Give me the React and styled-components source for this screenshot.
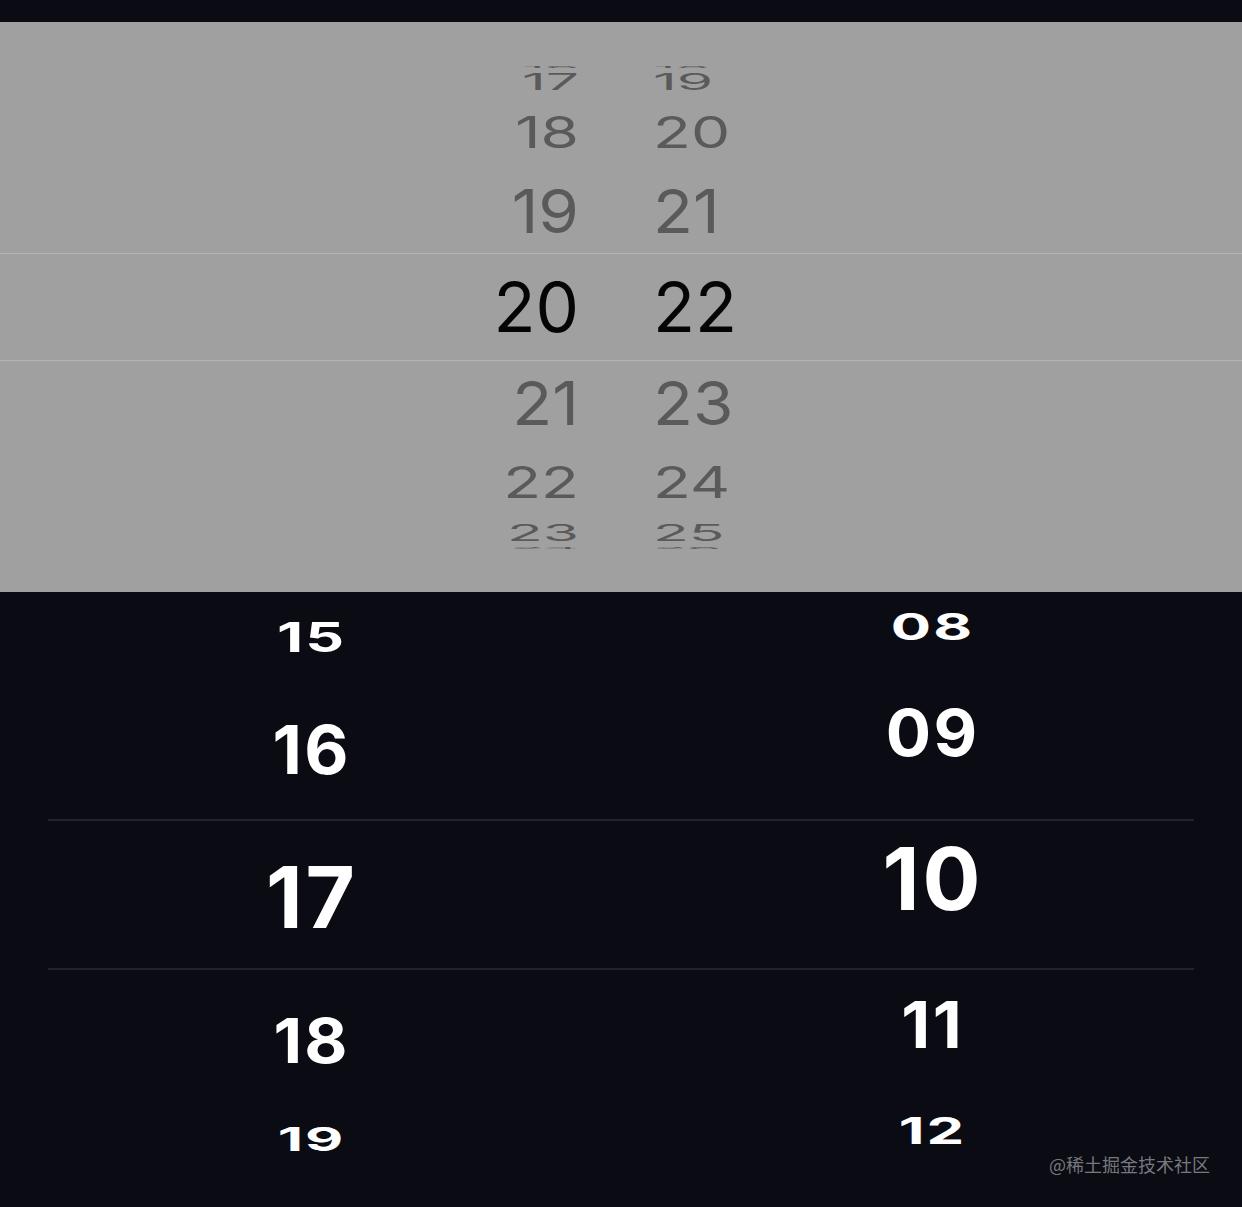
import React from "react";
import styled, { createGlobalStyle } from "styled-components";

const GlobalStyle = createGlobalStyle`
  html, body { margin: 0; padding: 0; background: #0a0b13; }
  body { font-family: Inter, "Liberation Sans", sans-serif; }
`;

const deg = Math.PI / 180;

// where a row lands on the drum: offset from the drum centre plus the squash
const place = (k, { step, shift = 0, radius, depth = 0, shrink, lens = 1, squash = true }) => {
  const theta = (k * step + shift) * deg;
  const near = Math.abs(theta) < (step * deg) / 2;
  const persp = 1 / (1 + depth * (1 - Math.cos(theta)));
  const sx = (1 - shrink * Math.abs(theta)) * (near ? 1 : lens);
  const sy = Math.max(Math.cos(theta) * (squash ? sx : near ? 1 : lens), 0.035);
  return { y: radius * Math.sin(theta) * persp, sx, sy, visible: Math.abs(theta) <= Math.PI / 2 + 1e-6 };
};

const Page = styled.div`
  display: flex;
  flex-direction: column;
  width: 1242px;
  min-height: 1207px;
  background: #0a0b13;
`;

const TopStrip = styled.div`
  height: 22px;
  background: #0a0b13;
`;

const LightPanel = styled.div`
  position: relative;
  height: 570px;
  background: #a0a0a0;
  overflow: hidden;
  display: flex;
  justify-content: center;
  gap: 74px;
  padding-right: 10px;
`;

const LightBand = styled.div`
  position: absolute;
  left: 0;
  right: 0;
  top: 231px;
  height: 106px;
  border-top: 1px solid #b4b4b4;
  border-bottom: 1px solid #b4b4b4;
  pointer-events: none;
`;

const DarkPanel = styled.div`
  position: relative;
  height: 615px;
  background: #0a0b13;
  overflow: hidden;
`;

const DarkColumns = styled.div`
  display: grid;
  grid-template-columns: 1fr 1fr;
  height: 573px;
`;

const DarkBand = styled.div`
  position: absolute;
  left: 48px;
  right: 48px;
  top: 227px;
  height: 147px;
  border-top: 2px solid #22232e;
  border-bottom: 2px solid #22232e;
  pointer-events: none;
`;

const Drum = styled.div`
  position: relative;
  width: ${(p) => p.$width || "auto"};
  height: 100%;
`;

// rows sit on a cylinder, so each one is placed from the drum centre
const Row = styled.div`
  position: absolute;
  left: 0;
  right: 0;
  top: 50%;
  height: ${(p) => p.$size}px;
  margin-top: -${(p) => p.$size / 2}px;
  padding-left: ${(p) => p.$tracking}px;
  line-height: ${(p) => p.$size}px;
  font-size: ${(p) => p.$size}px;
  font-weight: ${(p) => p.$weight};
  letter-spacing: ${(p) => p.$tracking}px;
  text-align: ${(p) => p.$align};
  transform-origin: ${(p) => p.$align} center;
  color: ${(p) => p.$color};
  white-space: nowrap;
`;

const Watermark = styled.span`
  position: absolute;
  right: 32px;
  bottom: 31px;
  font-family: "Noto Sans CJK SC", "Liberation Sans", sans-serif;
  font-size: 18px;
  line-height: 24px;
  color: #77787e;
`;

const Wheel = ({ values, selected, drum, size, weight, tracking = 0, align, width, color, activeColor }) => (
  <Drum $width={width}>
    {values.map((v, i) => {
      const pos = place(i - selected, drum);
      if (!pos.visible) return null;
      return (
        <Row
          key={v}
          $size={size}
          $weight={weight}
          $tracking={tracking}
          $align={align}
          $color={i === selected ? activeColor : color}
          style={{ transform: `translateY(${pos.y}px) scale(${pos.sx}, ${pos.sy})` }}
        >
          {v}
        </Row>
      );
    })}
  </Drum>
);

const pad = (n) => String(n).padStart(2, "0");
const range = (a, b) => Array.from({ length: b - a + 1 }, (_, i) => a + i);

const light = { size: 69, weight: 400, color: "#5a5a5a", activeColor: "#050505", width: "160px" };
const lightDrum = { step: 22.5, radius: 251, depth: 0.0425, shrink: 0.127 };
const dark = { size: 86, weight: 700, tracking: 3, color: "#ffffff", activeColor: "#ffffff", align: "center" };
const darkDrum = { step: 30.3, radius: 289, shrink: 0.19, lens: 0.87, squash: false };

const App = () => {
  return (
    <Page>
      <GlobalStyle />
      <TopStrip />
      <LightPanel>
        <LightBand />
        <Wheel {...light} drum={lightDrum} values={range(16, 24).map(String)} selected={4} align="right" />
        <Wheel {...light} drum={lightDrum} values={range(18, 26).map(String)} selected={4} align="left" />
      </LightPanel>
      <DarkPanel>
        <DarkBand />
        <DarkColumns>
          <Wheel {...dark} drum={{ ...darkDrum, shift: 3.67 }} values={range(15, 19).map(pad)} selected={2} />
          <Wheel {...dark} drum={darkDrum} values={range(8, 12).map(pad)} selected={2} />
        </DarkColumns>
        <Watermark>@稀土掘金技术社区</Watermark>
      </DarkPanel>
    </Page>
  );
};

export default App;
